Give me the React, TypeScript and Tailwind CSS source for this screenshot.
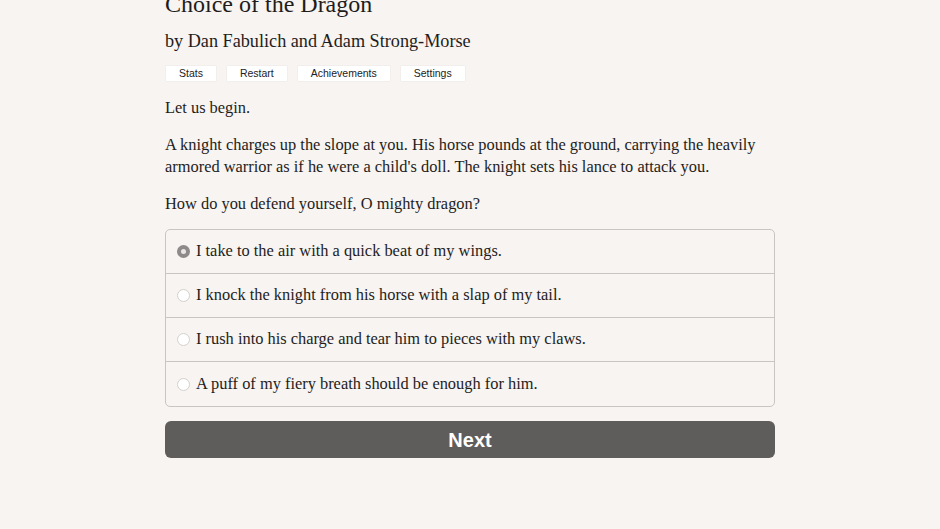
import React, { useState } from "react";

const choices = [
  "I take to the air with a quick beat of my wings.",
  "I knock the knight from his horse with a slap of my tail.",
  "I rush into his charge and tear him to pieces with my claws.",
  "A puff of my fiery breath should be enough for him.",
];

const serif = { fontFamily: '"Liberation Serif", "DejaVu Serif", serif' };

export default function App() {
  const [selected, setSelected] = useState(0);

  return (
    <div className="min-h-[529px] bg-[#f7f4f2] text-[#1f1d1c] overflow-hidden" style={serif}>
      <div className="mx-auto w-[610px]">
        {/* HEADER */}
        <h1 className="-mt-[9px] text-[24px] leading-[26px]">Choice of the Dragon</h1>
        <h2 className="mt-[13px] text-[18.2px] leading-[22px]">by Dan Fabulich and Adam Strong-Morse</h2>

        {/* MENU */}
        <div className="mt-[14px] flex gap-[11px] pl-px font-['Liberation_Sans',Arial,sans-serif] text-[10.5px]">
          {["Stats", "Restart", "Achievements", "Settings"].map((label) => (
            <button
              key={label}
              className="h-[15px] bg-white px-[13px] leading-[15px] text-[#222] shadow-[0_0_1px_rgba(0,0,0,0.15)]"
            >
              {label}
            </button>
          ))}
        </div>

        {/* STORY */}
        <div className="mt-[16px] text-[16.4px] leading-[22px]">
          <p>Let us begin.</p>
          <p className="mt-[15px]">
            A knight charges up the slope at you. His horse pounds at the ground, carrying the heavily armored
            warrior as if he were a child's doll. The knight sets his lance to attack you.
          </p>
          <p className="mt-[15px]">How do you defend yourself, O mighty dragon?</p>
        </div>

        {/* CHOICES */}
        <div className="mt-[14px] rounded-[5px] border border-[#c9c5c3] overflow-hidden">
          {choices.map((text, i) => (
            <label
              key={text}
              onClick={() => setSelected(i)}
              className="flex h-[44px] items-center gap-[6px] border-b border-[#c9c5c3] pl-[11px] text-[16.4px] last:border-b-0"
            >
              <span
                className={
                  selected === i
                    ? "flex size-[13px] items-center justify-center rounded-full bg-[#8d8a89]"
                    : "size-[13px] rounded-full border border-[#d3d0ce] bg-white"
                }
              >
                {selected === i && <span className="size-[5px] rounded-full bg-[#e9e7e6]" />}
              </span>
              {text}
            </label>
          ))}
        </div>

        {/* NEXT */}
        <button
          className="mt-[14px] h-[37px] w-full rounded-[6px] bg-[#5f5d5b] text-[20px] font-bold text-white"
          style={{ fontFamily: '"Liberation Sans", Arial, sans-serif' }}
        >
          Next
        </button>
      </div>
    </div>
  );
}
